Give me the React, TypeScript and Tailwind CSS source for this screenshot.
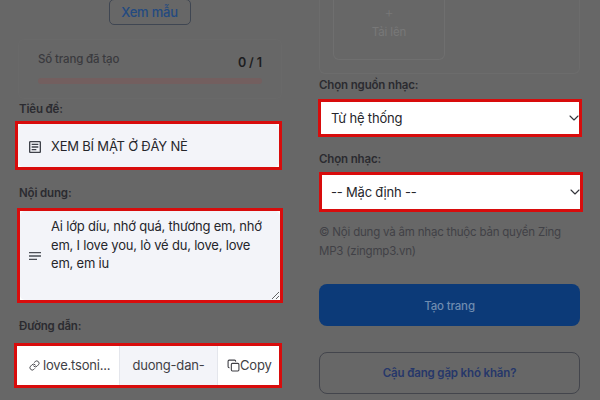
import { ChevronDown, Copy, Link } from "lucide-react";
import { MdOutlineArticle, MdOutlineNotes } from "react-icons/md";

const labelClass = "block text-[11.5px] tracking-[-0.15px] leading-[16px] font-semibold text-[#2b2b30]";
const redBox = "border-[3px] border-[#d80c0c] bg-white";
const bodyText = "text-[13px] tracking-[-0.2px]";

export default function App() {
  return (
    <div className="w-[600px] h-[400px] overflow-hidden flex bg-[#676767] font-['Inter','Noto_Sans',sans-serif]">
      {/* cot trai */}
      <div className="w-[319px] shrink-0 pl-[15px] pr-[36px] flex flex-col">
        <button className={`${bodyText} self-center -mt-px ml-[1px] w-[82px] h-[26px] shrink-0 rounded-[5px] border border-[#3f4652] leading-none font-medium text-[#234a80]`}>
          Xem mẫu
        </button>

        <div className="mt-[14px] ml-[3px] w-[264px] h-[60px] shrink-0 rounded-[6px] border border-[#696969] px-[19px] pt-[11px]">
          <div className="flex justify-between">
            <span className="text-[11.5px] tracking-[-0.15px] leading-[16px] font-medium text-[#3a3a3e]">Số trang đã tạo</span>
            <span className="mt-[3px] text-[12.5px] tracking-[-0.1px] leading-[18px] font-semibold text-[#1d1d20]">0 / 1</span>
          </div>
          <div className="mt-[6px] h-[6px] rounded-full bg-[#735f5f]" />
        </div>

        <label className={`${labelClass} mt-[2px] ml-[4px]`}>Tiêu đề:</label>
        <div className={`${redBox} mt-[4px] h-[49px] w-[267px] flex`}>
          <div className="flex-1 rounded-[5px] bg-[#f3f4f9] flex items-center pl-[9px]">
            <MdOutlineArticle className="text-[#3f424a] shrink-0 mt-[2px]" size={16} />
            <input
              defaultValue="XEM BÍ MẬT Ở ĐÂY NÈ"
              className={`${bodyText} ml-[8px] w-[210px] pt-[3px] bg-transparent outline-none text-[#26262b]`}
            />
          </div>
        </div>

        <label className={`${labelClass} mt-[15px] ml-[4px]`}>Nội dung:</label>
        <div className={`${redBox} mt-[7px] ml-[2px] h-[95px] w-[266px] flex`}>
          <div className="flex-1 rounded-[5px] bg-[#f3f4f9] flex items-center pl-[7px]">
            <MdOutlineNotes className="text-[#4a4d55] shrink-0" size={16} />
            <textarea
              defaultValue="Ai lớp díu, nhớ quá, thương em, nhớ em, I love you, lò vé du, love, love em, em iu"
              className={`${bodyText} ml-[8px] self-stretch flex-1 bg-transparent outline-none pt-[6px] pr-[10px] leading-[18.7px] text-[#26262b]`}
            />
          </div>
        </div>

        <label className={`${labelClass} mt-[15px] ml-[4px]`}>Đường dẫn:</label>
        <div className={`${redBox} ${bodyText} mt-[9px] -ml-px h-[45px] w-[268px] flex items-stretch text-[#3f3f45]`}>
          <div className="w-[102px] flex items-center pl-[12px]">
            <Link size={11} className="shrink-0" />
            <span className="ml-[3px] truncate">love.tsoni...</span>
          </div>
          <div className="w-[99px] flex items-center justify-center bg-[#f3f4f9] border-x border-[#e4e6ec]">duong-dan-</div>
          <div className="flex-1 flex items-center pl-[9px]">
            <Copy size={13} className="shrink-0" />
            <span>Copy</span>
          </div>
        </div>
      </div>

      {/* cot phai */}
      <div className="flex-1 pr-[20px] flex flex-col">
        <div className="h-[75px] w-[261px] -mt-px shrink-0 rounded-b-[6px] border-x border-b border-[#6c6c6c] pl-[13px]">
          <div className="h-[61px] w-[112px] rounded-b-[6px] border-x border-b border-[#6f6f6f] flex flex-col items-center justify-start pt-[6px] text-[#787878]">
            <span className="text-[14px] leading-[14px] font-light">+</span>
            <span className="mt-[5px] text-[11.5px] tracking-[-0.15px] leading-[16px]">Tải lên</span>
          </div>
        </div>

        <label className={`${labelClass} mt-[3px]`}>Chọn nguồn nhạc:</label>
        <div className={`${redBox} mt-[6px] -ml-px h-[38px] w-[264px] flex items-center`}>
          <select defaultValue="system" className={`${bodyText} flex-1 h-full pt-[2px] appearance-none bg-white outline-none pl-[10px] text-[#26262b]`}>
            <option value="system">Từ hệ thống</option>
          </select>
          <ChevronDown size={16} strokeWidth={1.6} className="shrink-0 -mr-[3px] text-[#33343a]" />
        </div>

        <label className={`${labelClass} mt-[14px]`}>Chọn nhạc:</label>
        <div className={`${redBox} mt-[5px] h-[40px] w-[264px] flex items-center`}>
          <select defaultValue="default" className={`${bodyText} flex-1 h-full pt-[2px] appearance-none bg-white outline-none pl-[9px] text-[#26262b]`}>
            <option value="default">-- Mặc định --</option>
          </select>
          <ChevronDown size={16} strokeWidth={1.6} className="shrink-0 -mr-[3px] text-[#33343a]" />
        </div>

        <p className="mt-[11px] w-[255px] text-[11.5px] tracking-[-0.2px] leading-[18.5px] text-[#414146]">
          © Nội dung và âm nhạc thuộc bản quyền Zing MP3 (zingmp3.vn)
        </p>

        <button className="mt-[24px] h-[42px] w-[261px] shrink-0 rounded-[8px] bg-[#0c3a78] pt-[3px] text-[11.5px] tracking-[-0.15px] font-medium text-[#6f8cb0]">
          Tạo trang
        </button>
        <button className="mt-[26px] h-[42px] w-[261px] shrink-0 rounded-[8px] border border-[#43454c] pt-[2px] text-[11.5px] tracking-[-0.15px] font-semibold text-[#26376a]">
          Cậu đang gặp khó khăn?
        </button>
      </div>
    </div>
  );
}
